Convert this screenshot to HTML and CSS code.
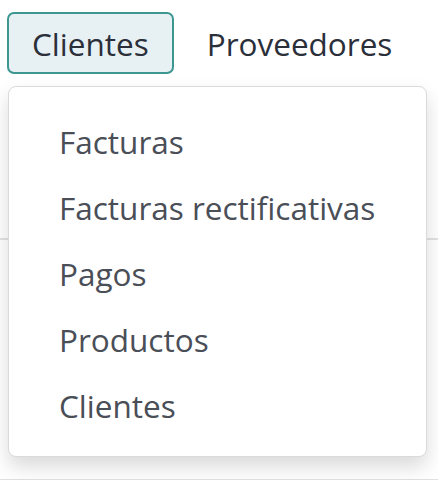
FILE: index.html
```html
<!DOCTYPE html>
<html>
<head>
    <title>Menu</title>
    <link rel="stylesheet" href="styles.css">
</head>
<body>
    <div class="page">
        <div class="menubar">
            <button class="menu_btn active">Clientes</button>
            <button class="menu_btn">Proveedores</button>
        </div>
        <div class="sheet">
            <div class="sheet_row"></div>
        </div>

        <ul class="dropdown">
            <li class="dropdown_item">Facturas</li>
            <li class="dropdown_item">Facturas rectificativas</li>
            <li class="dropdown_item">Pagos</li>
            <li class="dropdown_item">Productos</li>
            <li class="dropdown_item">Clientes</li>
        </ul>
    </div>
</body>
</html>
```

FILE: styles.css
```css
body {
    font-family: 'Open Sans', 'Noto Sans', sans-serif;
    background-color: #fff;
    margin: 0;
    padding: 0;
}

.page {
    position: relative;
    width: 438px;
    height: 480px;
    overflow: hidden;
}

.menubar {
    display: flex;
    gap: 8px;
    padding: 12px 0 0 7px;
}

.menu_btn {
    font-family: inherit;
    font-size: 31.5px;
    color: #2b2f3a;
    background: none;
    border: 2px solid transparent;
    border-radius: 7px;
    height: 62px;
    padding: 0 23px;
}

.menu_btn.active {
    background-color: #e7f0f3;
    border-color: #3c9791;
}

.sheet {
    margin-top: 12px;
    height: 393px;
    border-bottom: 1px solid #e0e0e0;
}

.sheet_row {
    height: 152px;
    border-bottom: 2px solid #e2e2e2;
}

.dropdown {
    position: absolute;
    top: 86px;
    left: 8px;
    width: 419px;
    height: 371px;
    box-sizing: border-box;
    margin: 0;
    padding: 22px 0;
    list-style: none;
    background-color: #fff;
    border: 1px solid #dadada;
    border-radius: 8px;
    box-shadow: 0 10px 20px rgba(0, 0, 0, 0.15);
}

.dropdown_item {
    font-size: 31.5px;
    color: #4a4e57;
    line-height: 66px;
    padding-left: 50px;
}
```
